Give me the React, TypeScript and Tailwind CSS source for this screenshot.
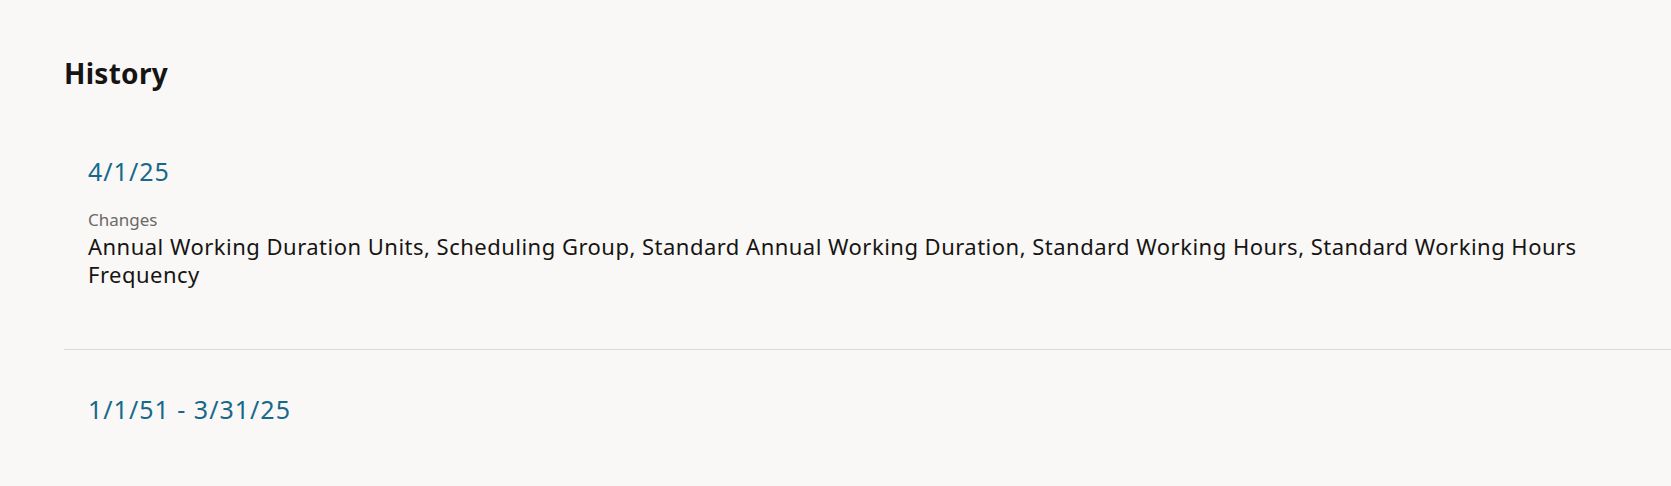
import React from 'react';

interface HistoryEntry {
  id: string;
  period: string;
  changes?: string;
}

const entries: HistoryEntry[] = [
  {
    id: 'h1',
    period: '4/1/25',
    changes:
      'Annual Working Duration Units, Scheduling Group, Standard Annual Working Duration, Standard Working Hours, Standard Working Hours Frequency',
  },
  {
    id: 'h2',
    period: '1/1/51 - 3/31/25',
  },
];

const HistoryItem: React.FC<{ entry: HistoryEntry; last: boolean }> = ({ entry, last }) => (
  <div className={last ? 'pl-6 pr-6 pt-[43px] pb-10' : 'pl-6 pr-6 pt-[65px] pb-[61px] border-b border-[#dedbd7]'}>
    <div className="text-[25px] leading-8 text-[#17698c] tracking-[0.04em]">{entry.period}</div>
    {entry.changes && (
      <div className="mt-[21px]">
        <div className="text-[17px] leading-6 text-[#6b6966]">Changes</div>
        <div className="text-[22px] leading-7 tracking-[0.022em] text-[#161513]">{entry.changes}</div>
      </div>
    )}
  </div>
);

export default function App() {
  return (
    <div
      className="min-h-screen bg-[#f9f8f6] pl-16 pt-[56px]"
      style={{ fontFamily: '"Noto Sans", "Open Sans", sans-serif' }}
    >
      <h1 className="text-[28px] leading-[34px] font-bold tracking-[0.01em] text-[#161513]">History</h1>
      <div>
        {entries.map((entry, i) => (
          <HistoryItem key={entry.id} entry={entry} last={i === entries.length - 1} />
        ))}
      </div>
    </div>
  );
}
